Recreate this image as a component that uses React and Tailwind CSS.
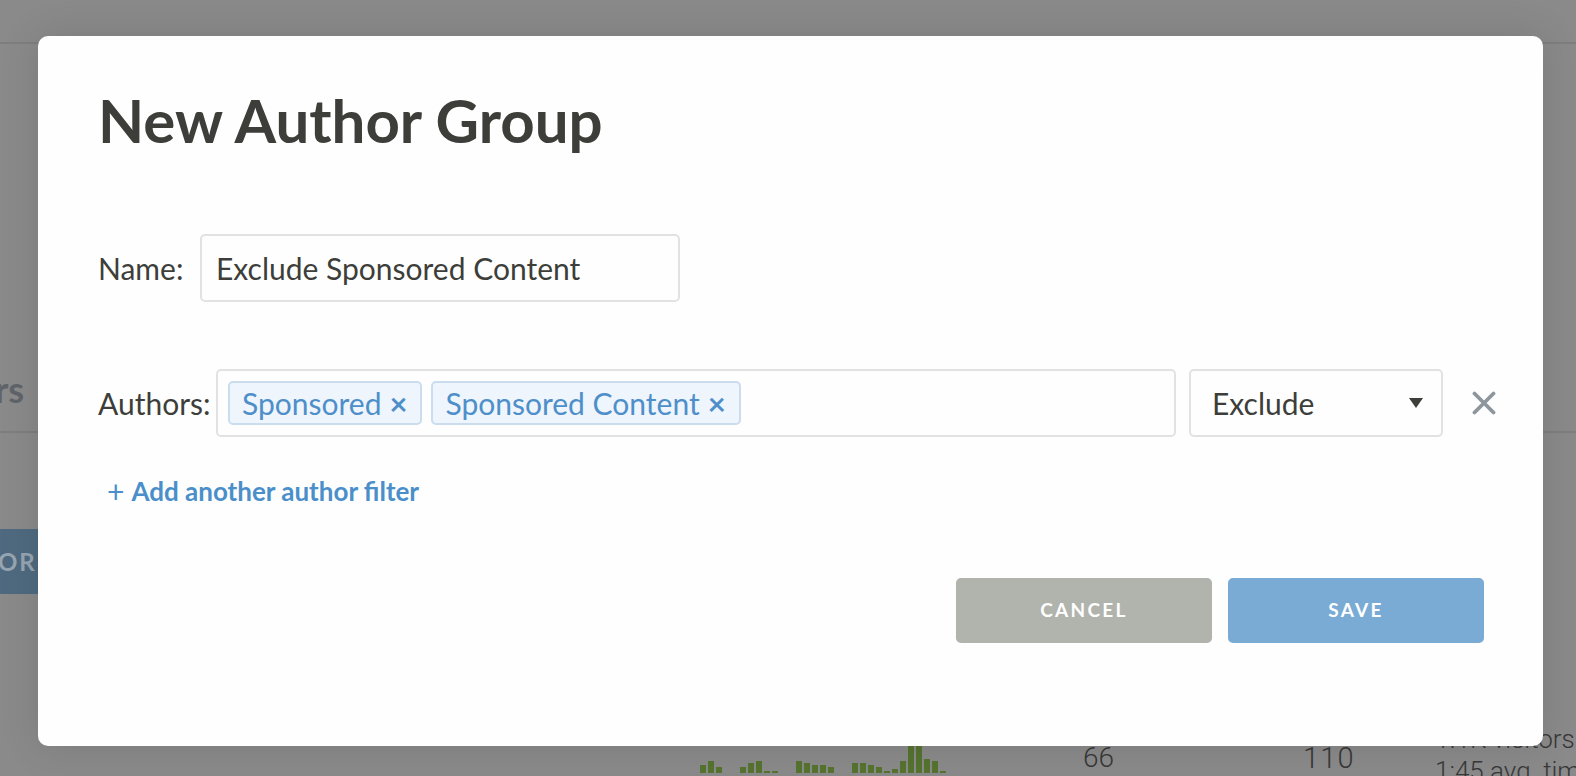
import React from "react";

const bars = [8,12,6,0,0,6,10,12,2,2,0,0,12,10,8,8,6,0,0,10,10,8,6,2,4,12,40,40,14,12,2];

function XIcon() {
  return (
    <svg width="24" height="24" viewBox="0 0 24 24" className="block">
      <path d="M2.5 2.5 L21.5 21.5 M21.5 2.5 L2.5 21.5" stroke="#8e969d" strokeWidth="3.8" strokeLinecap="round" fill="none" />
    </svg>
  );
}

function Tag({ label }) {
  return (
    <div className="shrink-0 flex items-center h-[44px] pl-[12px] pr-[13px] bg-[#eff5fc] border-2 border-[#cadcee] rounded-[5px] text-[#4e8fca] text-[30px] leading-none">
      <span>{label}</span>
      <span className="ml-[8px] text-[31px] font-bold">×</span>
    </div>
  );
}

export default function App() {
  return (
    <div className="relative w-[1576px] h-[776px] overflow-hidden bg-[#8a8a8a] font-['Lato',sans-serif]">
      {/* background page */}
      <div className="flex flex-col h-full">
        <div className="h-[44px] shrink-0 border-b-2 border-[#7e7e7e]" />
        <div className="h-[389px] shrink-0 flex items-end pb-[24px] border-b-2 border-[#7e7e7e]">
          <span className="-ml-[5px] text-[36px] font-bold leading-none text-[#60646a]">rs</span>
        </div>
        <div className="pt-[96px] shrink-0">
          <div className="h-[65px] w-[120px] bg-[#4f6a80] flex items-center">
            <span className="-ml-[2px] text-[24px] font-bold tracking-[0.08em] text-[#97a5b2] whitespace-nowrap">OR GROUP</span>
          </div>
        </div>
        <div className="mt-[143px] h-[36px] flex items-start shrink-0">
          <div className="w-[700px] shrink-0" />
          <div className="w-[383px] shrink-0 h-[36px] flex items-end gap-[2px]">
            {bars.map((h, i) => (
              <div key={i} className="w-[6px] bg-[#56732f]" style={{ height: h + "px" }} />
            ))}
          </div>
          <div className="w-[220px] shrink-0 pt-[7px] font-['Roboto'] font-light text-[28px] leading-[28px] text-[#383838]">66</div>
          <div className="w-[132px] shrink-0 pt-[7px] font-['Roboto'] font-light text-[29px] leading-[28px] tracking-[0.04em] text-[#383838]">110</div>
          <div className="-mt-[14px] font-['Roboto'] font-light text-[26px] leading-[32px] text-[#383838] whitespace-nowrap">
            <div>1.1K visitors</div>
            <div>1:45 avg. time</div>
          </div>
        </div>
      </div>

      {/* modal */}
      <div className="absolute left-[38px] top-[36px] w-[1505px] h-[710px] rounded-[10px] bg-[#fefefe] shadow-[0_0_40px_rgba(0,0,0,0.12)] pl-[60px] pr-[59px] pt-[54px] text-[#3d3e3a]">
        <h1 className="text-[60px] leading-none font-bold text-[#3d3e39]">New Author Group</h1>

        <div className="mt-[84px] flex items-center">
          <div className="w-[102px] shrink-0 text-[30px]">Name:</div>
          <div className="shrink-0 w-[480px] h-[68px] border-2 border-[#e2e2e2] rounded-[5px] flex items-center pl-[14px] text-[30px]">
            Exclude Sponsored Content
          </div>
        </div>

        <div className="mt-[67px] flex items-center">
          <div className="w-[118px] shrink-0 text-[30px]">Authors:</div>
          <div className="shrink-0 w-[960px] h-[68px] border-2 border-[#e2e2e2] rounded-[5px] flex items-center pl-[10px] gap-[9px]">
            <Tag label="Sponsored" />
            <Tag label="Sponsored Content" />
          </div>
          <div className="shrink-0 ml-[13px] w-[254px] h-[68px] border-2 border-[#e2e2e2] rounded-[5px] flex items-center justify-between pl-[21px] pr-[18px] text-[30px]">
            <span>Exclude</span>
            <svg width="14" height="10" viewBox="0 0 14 10" className="block">
              <path d="M0 0 L14 0 L7 10 Z" fill="#3d3e3a" />
            </svg>
          </div>
          <div className="shrink-0 ml-[29px]">
            <XIcon />
          </div>
        </div>

        <div className="mt-[39px] ml-[9px] h-[30px] flex items-center text-[#4a8fca] text-[26px] font-bold leading-none">
          <span className="font-normal text-[30px] mr-[7px]">+</span>
          <span>Add another author filter</span>
        </div>

        <div className="mt-[72px] flex justify-end gap-[16px]">
          <button className="w-[256px] h-[65px] rounded-[5px] bg-[#b1b3ad] text-white text-[19px] font-bold tracking-[0.12em]">CANCEL</button>
          <button className="w-[256px] h-[65px] rounded-[5px] bg-[#79abd5] text-white text-[19px] font-bold tracking-[0.12em]">SAVE</button>
        </div>
      </div>
    </div>
  );
}
